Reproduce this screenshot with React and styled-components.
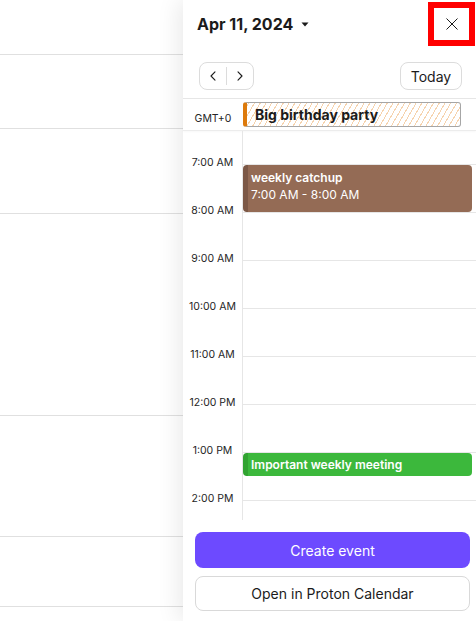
import React from "react";
import styled, { createGlobalStyle } from "styled-components";

const Global = createGlobalStyle`
  html, body { margin: 0; padding: 0; background: #fff; }
  body { font-family: Inter, "Noto Sans", sans-serif; color: #1b1b1b; -webkit-font-smoothing: antialiased; }
  * { box-sizing: border-box; }
`;

const Page = styled.div`
  display: flex;
  width: 476px;
  height: 621px;
  overflow: hidden;
`;

const Backdrop = styled.div`
  flex: 1;
  display: flex;
  flex-direction: column;
  background: #fff;
`;

const BackRow = styled.div`
  height: ${(p) => p.$h}px;
  flex: none;
  border-bottom: ${(p) => (p.$last ? "none" : "1px solid #e0e0e0")};
`;

const Panel = styled.aside`
  width: 293px;
  flex: none;
  display: flex;
  flex-direction: column;
  background: #fff;
  position: relative;
  z-index: 1;
  box-shadow: -4px 0 22px rgba(0, 0, 0, 0.09);
`;

const Header = styled.header`
  padding: 2px 0 8px 0;
  border-bottom: 1px solid #e6e6e6;
`;

const TitleRow = styled.div`
  display: flex;
  align-items: center;
  justify-content: space-between;
  height: 44px;
  padding-left: 14px;
  padding-right: 1px;
`;

const DateTitle = styled.button`
  display: flex;
  align-items: center;
  gap: 8px;
  border: none;
  background: none;
  padding: 0;
  font-family: Inter, sans-serif;
  font-size: 16px;
  font-weight: 700;
  color: #1b1b1b;
`;

const CloseButton = styled.button`
  width: 47px;
  height: 44px;
  border: 6px solid #ff0000;
  background: #fff;
  display: flex;
  align-items: center;
  justify-content: center;
  padding: 0;
`;

const NavRow = styled.div`
  display: flex;
  align-items: center;
  justify-content: space-between;
  margin-top: 16px;
  padding: 0 14px 0 16px;
`;

const NavGroup = styled.div`
  display: flex;
  align-items: center;
  height: 28px;
  border: 1px solid #dcdcdc;
  border-radius: 8px;
`;

const NavButton = styled.button`
  width: 26px;
  height: 100%;
  display: flex;
  align-items: center;
  justify-content: center;
  border: none;
  background: none;
  padding: 0;
`;

const NavDivider = styled.span`
  width: 1px;
  height: 18px;
  background: #dcdcdc;
`;

const TodayButton = styled.button`
  height: 28px;
  width: 62px;
  border: 1px solid #dcdcdc;
  border-radius: 8px;
  background: #fff;
  font-family: Inter, sans-serif;
  font-size: 14px;
  color: #1b1b1b;
  padding: 0;
`;

const AllDayRow = styled.div`
  display: grid;
  grid-template-columns: 60px 1fr;
  height: 32px;
  border-bottom: 1px solid #ececec;
  box-shadow: 0 1px 2px rgba(0, 0, 0, 0.03);
`;

const ZoneLabel = styled.div`
  font-size: 10.5px;
  color: #262626;
  text-align: center;
  padding-top: 13px;
  line-height: 14px;
`;

const AllDayEvent = styled.div`
  margin: 3px 15px 3px 0;
  height: 25px;
  border: 1px solid #a6a6a6;
  border-left: 4px solid #dd7a0b;
  border-radius: 3px;
  display: flex;
  align-items: center;
  padding-left: 8px;
  font-size: 14px;
  font-weight: 700;
  color: #1b1b1b;
  background: repeating-linear-gradient(
    -60deg,
    #fff 0px,
    #fff 4px,
    #f6d3ae 4px,
    #f6d3ae 5px
  );
`;

const Scroll = styled.div`
  flex: 1;
  display: grid;
  grid-template-columns: 60px 1fr;
  overflow: hidden;
`;

const TimeCol = styled.div`
  border-right: 1px solid #e6e6e6;
  padding-top: 25px;
`;

const TimeLabel = styled.div`
  height: 48px;
  font-size: 10.5px;
  line-height: 14px;
  color: #262626;
  text-align: center;
`;

const DayCol = styled.div`
  position: relative;
  padding-top: 33px;
`;

const Slot = styled.div`
  height: 48px;
  border-top: 1px solid #e6e6e6;
`;

const Event = styled.div`
  position: absolute;
  left: 0;
  right: 4px;
  border-radius: 4px;
  background: ${(p) => p.$bg};
  border-left: 5px solid ${(p) => p.$edge};
  color: #fff;
  font-size: 12px;
  line-height: 17px;
  padding: ${(p) => (p.$compact ? "0 3px" : "4px 3px")};
  display: flex;
  flex-direction: column;
  justify-content: ${(p) => (p.$compact ? "center" : "flex-start")};
`;

const EventTitle = styled.span`
  font-weight: 600;
`;

const EventTime = styled.span`
  font-weight: 400;
`;

const Footer = styled.footer`
  display: flex;
  flex-direction: column;
  gap: 8px;
  padding: 12px 6px 10px 12px;
`;

const PrimaryButton = styled.button`
  height: 36px;
  border: none;
  border-radius: 8px;
  background: #6d4aff;
  color: #fff;
  font-family: Inter, sans-serif;
  font-size: 14px;
`;

const SecondaryButton = styled.button`
  height: 35px;
  border: 1px solid #d9d9d9;
  border-radius: 8px;
  background: #fff;
  color: #1b1b1b;
  font-family: Inter, sans-serif;
  font-size: 14px;
`;

const Caret = () => (
  <svg width="8" height="5" viewBox="0 0 8 5">
    <path d="M0.5 0.5 L7.5 0.5 L4 4.5 Z" fill="#1b1b1b" />
  </svg>
);

const CloseIcon = () => (
  <svg width="12" height="12" viewBox="0 0 12 12">
    <path d="M0.5 0.5 L11.5 11.5 M11.5 0.5 L0.5 11.5" stroke="#1b1b1b" strokeWidth="1" fill="none" />
  </svg>
);

const Chevron = ({ dir }) => (
  <svg width="6" height="10" viewBox="0 0 6 10">
    <path
      d={dir === "left" ? "M5 0.8 L1 5 L5 9.2" : "M1 0.8 L5 5 L1 9.2"}
      stroke="#1b1b1b"
      strokeWidth="1.1"
      fill="none"
      strokeLinecap="round"
      strokeLinejoin="round"
    />
  </svg>
);

const backRows = [55, 74, 85, 202, 121, 70, 14];
const hours = ["7:00 AM", "8:00 AM", "9:00 AM", "10:00 AM", "11:00 AM", "12:00 PM", "1:00 PM", "2:00 PM"];
const HOUR = 48;
const FIRST = 7;
const OFFSET = 33;
const events = [
  { title: "weekly catchup", time: "7:00 AM - 8:00 AM", start: 7, end: 8, bg: "#946b55", edge: "#7c5846" },
  { title: "Important weekly meeting", start: 13, end: 13.5, bg: "#3cb83c", edge: "#31a331", compact: true },
];

export default function App() {
  return (
    <>
      <Global />
      <Page>
        <Backdrop>
          {backRows.map((h, i) => (
            <BackRow key={i} $h={h} $last={i === backRows.length - 1} />
          ))}
        </Backdrop>
        <Panel>
          <Header>
            <TitleRow>
              <DateTitle>
                Apr 11, 2024
                <Caret />
              </DateTitle>
              <CloseButton aria-label="Close">
                <CloseIcon />
              </CloseButton>
            </TitleRow>
            <NavRow>
              <NavGroup>
                <NavButton aria-label="Previous">
                  <Chevron dir="left" />
                </NavButton>
                <NavDivider />
                <NavButton aria-label="Next">
                  <Chevron dir="right" />
                </NavButton>
              </NavGroup>
              <TodayButton>Today</TodayButton>
            </NavRow>
          </Header>
          <AllDayRow>
            <ZoneLabel>GMT+0</ZoneLabel>
            <AllDayEvent>Big birthday party</AllDayEvent>
          </AllDayRow>
          <Scroll>
            <TimeCol>
              {hours.map((h) => (
                <TimeLabel key={h}>{h}</TimeLabel>
              ))}
            </TimeCol>
            <DayCol>
              {hours.map((h) => (
                <Slot key={h} />
              ))}
              {events.map((e) => (
                <Event
                  key={e.title}
                  $bg={e.bg}
                  $edge={e.edge}
                  $compact={e.compact}
                  style={{
                    top: OFFSET + (e.start - FIRST) * HOUR + 1,
                    height: (e.end - e.start) * HOUR - 1,
                  }}
                >
                  <EventTitle>{e.title}</EventTitle>
                  {e.time && <EventTime>{e.time}</EventTime>}
                </Event>
              ))}
            </DayCol>
          </Scroll>
          <Footer>
            <PrimaryButton>Create event</PrimaryButton>
            <SecondaryButton>Open in Proton Calendar</SecondaryButton>
          </Footer>
        </Panel>
      </Page>
    </>
  );
}
